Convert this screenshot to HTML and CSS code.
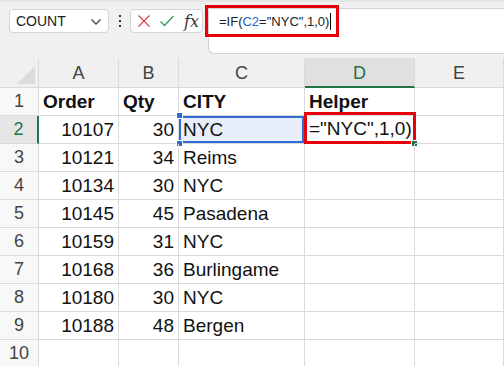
FILE: index.html
```html
<!doctype html>
<html lang="en">
  <head>
    <meta charset="UTF-8" />
    <title>Helper column</title>
    <link rel="stylesheet" href="styles.css">
  </head>
  <body>
    <div class="toolbar">
      <div class="namebox">
        <span>COUNT</span>
        <svg class="chev" width="12" height="8" viewBox="0 0 12 8"><path d="M1.5 1.5 L6 6 L10.5 1.5" fill="none" stroke="#444" stroke-width="1.3"/></svg>
      </div>
      <div class="kebab"><i></i><i></i><i></i></div>
      <div class="fxbox">
        <svg width="14" height="14" viewBox="0 0 14 14"><path d="M1.5 1.5 L12.5 12.5 M12.5 1.5 L1.5 12.5" stroke="#d9464a" stroke-width="1.3" fill="none"/></svg>
        <svg width="16" height="14" viewBox="0 0 16 14"><path d="M1.5 7.5 L5.5 11.5 L14.5 2" stroke="#3f9a55" stroke-width="1.4" fill="none"/></svg>
        <span class="fx">fx</span>
      </div>
      <div class="formula">
        <span class="hl">=IF(<span class="ref">C2</span>="NYC",1,0)<span class="caret"></span></span>
      </div>
    </div>

    <div class="sheet">
      <div class="corner"><span class="tri"></span></div>
      <div class="colhead">A</div>
      <div class="colhead">B</div>
      <div class="colhead">C</div>
      <div class="colhead active">D</div>
      <div class="colhead">E</div>

      <div class="rowhead">1</div>
      <div class="cell bold">Order</div>
      <div class="cell bold">Qty</div>
      <div class="cell bold">CITY</div>
      <div class="cell bold">Helper</div>
      <div class="cell"></div>

      <div class="rowhead active">2</div>
      <div class="cell num">10107</div>
      <div class="cell num">30</div>
      <div class="cell sel">NYC<i class="h tl"></i><i class="h bl"></i></div>
      <div class="cell edit"><span class="mark">="NYC",1,0)</span><i class="h br"></i></div>
      <div class="cell"></div>

      <div class="rowhead">3</div>
      <div class="cell num">10121</div>
      <div class="cell num">34</div>
      <div class="cell">Reims</div>
      <div class="cell"></div>
      <div class="cell"></div>

      <div class="rowhead">4</div>
      <div class="cell num">10134</div>
      <div class="cell num">30</div>
      <div class="cell">NYC</div>
      <div class="cell"></div>
      <div class="cell"></div>

      <div class="rowhead">5</div>
      <div class="cell num">10145</div>
      <div class="cell num">45</div>
      <div class="cell">Pasadena</div>
      <div class="cell"></div>
      <div class="cell"></div>

      <div class="rowhead">6</div>
      <div class="cell num">10159</div>
      <div class="cell num">31</div>
      <div class="cell">NYC</div>
      <div class="cell"></div>
      <div class="cell"></div>

      <div class="rowhead">7</div>
      <div class="cell num">10168</div>
      <div class="cell num">36</div>
      <div class="cell">Burlingame</div>
      <div class="cell"></div>
      <div class="cell"></div>

      <div class="rowhead">8</div>
      <div class="cell num">10180</div>
      <div class="cell num">30</div>
      <div class="cell">NYC</div>
      <div class="cell"></div>
      <div class="cell"></div>

      <div class="rowhead">9</div>
      <div class="cell num">10188</div>
      <div class="cell num">48</div>
      <div class="cell">Bergen</div>
      <div class="cell"></div>
      <div class="cell"></div>

      <div class="rowhead">10</div>
      <div class="cell"></div>
      <div class="cell"></div>
      <div class="cell"></div>
      <div class="cell"></div>
      <div class="cell"></div>
    </div>
  </body>
</html>
```

FILE: styles.css
```css
body {
  margin: 0;
  width: 504px;
  height: 366px;
  overflow: hidden;
  background: #fff;
  font-family: "Liberation Sans", Arial, sans-serif;
  color: #111;
}
.toolbar {
  height: 58px;
  box-sizing: border-box;
  background: #f0f0f0;
  display: flex;
  align-items: flex-start;
  padding: 9px 0 0 9px;
  border-top: 2px solid #e6e6e6;
}
.namebox {
  width: 100px;
  height: 24px;
  box-sizing: border-box;
  margin-top: -2px;
  background: #fff;
  border: 1px solid #d4d4d4;
  border-radius: 4px;
  display: flex;
  align-items: center;
  justify-content: space-between;
  padding: 0 6px 0 6px;
  font-size: 14px;
  color: #222;
}
.chev {
  margin-top: 1px;
}
.kebab {
  width: 21px;
  height: 24px;
  margin-top: -2px;
  display: flex;
  flex-direction: column;
  align-items: center;
  justify-content: center;
  gap: 3px;
}
.kebab i {
  width: 2px;
  height: 2px;
  background: #333;
}
.fxbox {
  width: 73px;
  height: 24px;
  box-sizing: border-box;
  margin-top: -2px;
  background: #fff;
  border: 1px solid #d4d4d4;
  border-radius: 4px;
  display: flex;
  align-items: center;
  gap: 8px;
  padding-left: 6px;
}
.fx {
  font-family: "DejaVu Serif", "Liberation Serif", serif;
  font-style: italic;
  font-size: 16px;
  color: #333;
  margin-left: 1px;
}
.formula {
  flex: 1;
  height: 46px;
  box-sizing: border-box;
  margin: -3px 0 0 5px;
  background: #fff;
  border: 1px solid #d4d4d4;
  border-right: none;
  border-radius: 0 0 0 6px;
  font-size: 13px;
}
.hl {
  display: inline-block;
  margin: -4px 0 0 -4px;
  border: 3px solid #e8000b;
  padding: 5px 5px 4px 11px;
  line-height: 16px;
  color: #222;
}
.ref {
  color: #1f63c6;
}
.caret {
  display: inline-block;
  width: 1px;
  height: 17px;
  background: #000;
  vertical-align: -4px;
  margin-left: 1px;
}
.sheet {
  display: grid;
  grid-template-columns: 39px 80px 60px 126px 110px 1fr;
  grid-template-rows: 30px;
  grid-auto-rows: 28px;
  font-size: 19px;
}
.sheet > div {
  box-sizing: border-box;
  border-right: 1px solid #dadada;
  border-bottom: 1px solid #dadada;
  line-height: 27px;
  white-space: nowrap;
}
.corner {
  background: #f0f0f0;
  position: relative;
}
.tri {
  position: absolute;
  right: 3px;
  bottom: 3px;
  width: 0;
  height: 0;
  border-left: 18px solid transparent;
  border-bottom: 18px solid #dcdcdc;
}
.colhead {
  background: #f0f0f0;
  text-align: center;
  font-size: 18px;
  color: #444;
  line-height: 30px !important;
}
.colhead.active {
  background: #e0e0e0;
  color: #217346;
  border-bottom: 2px solid #217346 !important;
}
.rowhead {
  background: #f8f8f8;
  text-align: center;
  font-size: 18px;
  color: #444;
}
.rowhead.active {
  background: #e6e6e6;
  color: #217346;
  border-right: 2px solid #217346 !important;
}
.cell {
  padding: 0 4px;
  position: relative;
}
.num {
  text-align: right;
}
.bold {
  font-weight: bold;
}
.sel {
  background: #e8eef9;
  box-shadow: inset 0 0 0 2px #2f6bd0;
}
.h {
  position: absolute;
  width: 5px;
  height: 5px;
  background: #2f6bd0;
  border: 1px solid #fff;
}
.tl {
  left: -3px;
  top: -4px;
}
.bl {
  left: -3px;
  bottom: -4px;
}
.br {
  right: -4px;
  bottom: -4px;
  background: #217346;
}
.edit {
  padding: 0;
}
.mark {
  position: absolute;
  left: -1px;
  top: -4px;
  width: 112px;
  height: 32px;
  box-sizing: border-box;
  border: 3px solid #e8000b;
  padding-left: 2px;
  line-height: 28px;
  color: #111;
}
```
